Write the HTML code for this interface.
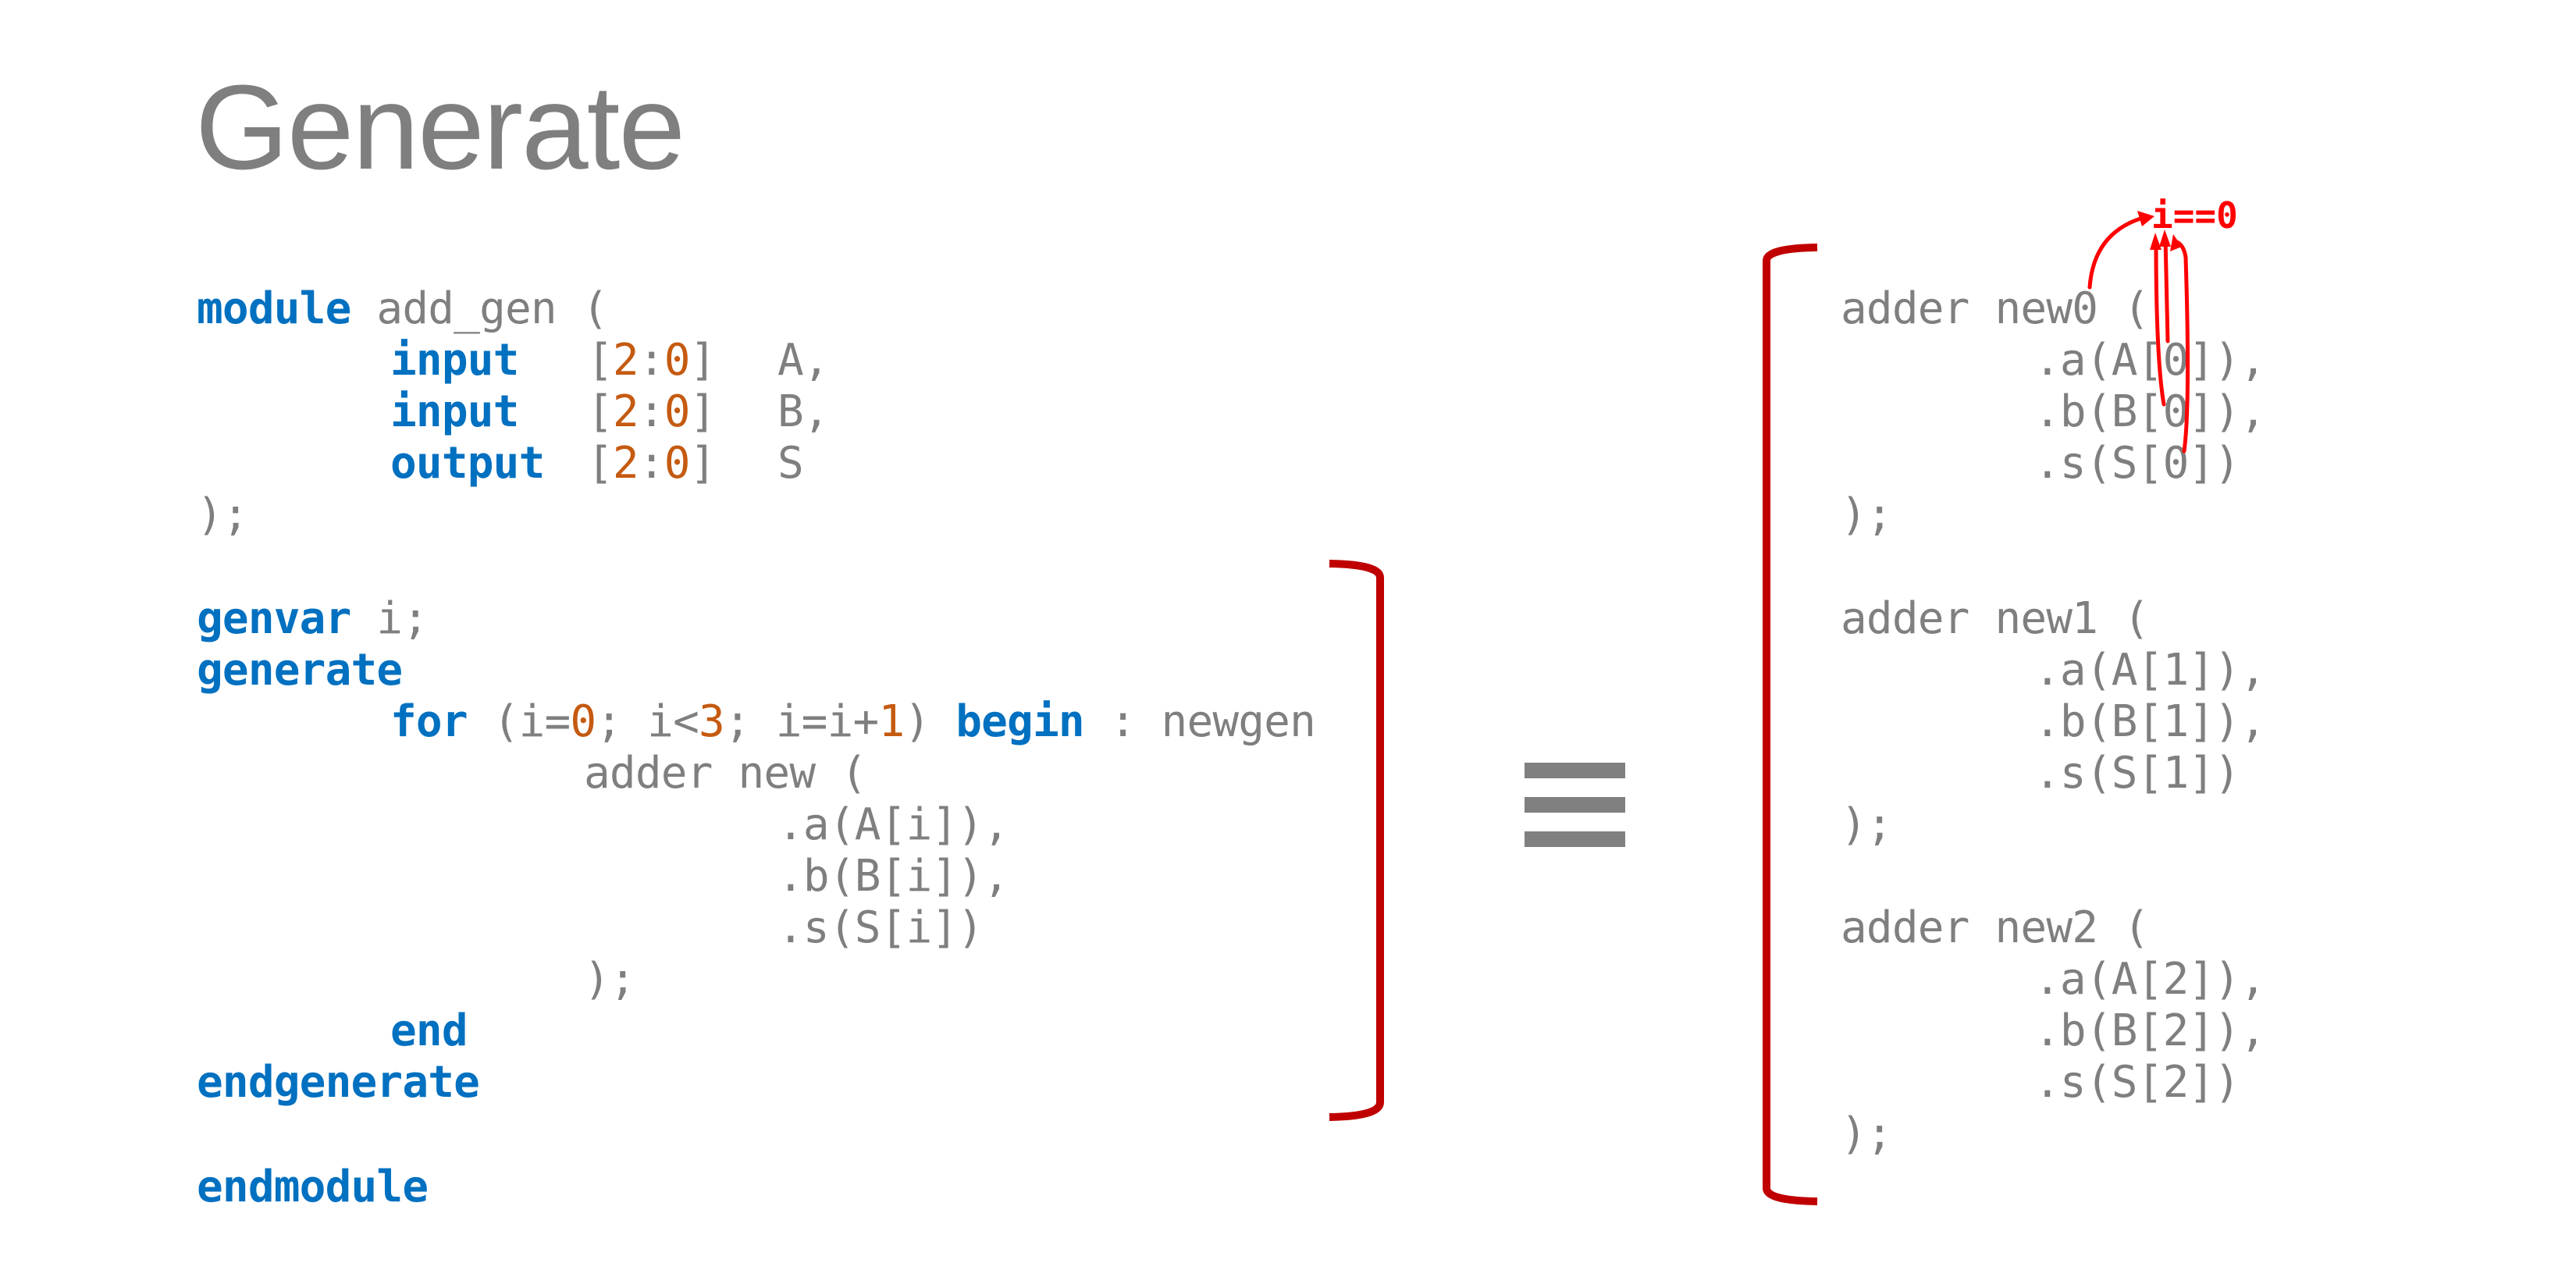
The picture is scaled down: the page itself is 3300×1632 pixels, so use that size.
<!DOCTYPE html>
<html><head><meta charset="utf-8"><style>
html,body{margin:0;padding:0;background:#fff;}
body{width:3300px;height:1632px;position:relative;overflow:hidden;}
.t{position:absolute;left:250px;top:86px;font-family:"Liberation Sans",sans-serif;font-size:154px;color:#7f7f7f;line-height:1;letter-spacing:-2px;}
.l{position:absolute;font-family:"DejaVu Sans Mono",monospace;font-size:56px;line-height:66px;height:66px;white-space:pre;color:#7f7f7f;letter-spacing:-0.8px;}
.k{color:#0070c0;font-weight:bold;}
.n{color:#c55a11;}
</style></head><body>
<div class="t">Generate</div>

<div class="l" style="left:252px;top:363px"><span class="k">module</span> add_gen (</div>
<div class="l" style="left:500px;top:429px"><span class="k">input</span></div>
<div class="l" style="left:752px;top:429px">[<span class="n">2</span>:<span class="n">0</span>]</div>
<div class="l" style="left:996px;top:429px">A,</div>
<div class="l" style="left:500px;top:495px"><span class="k">input</span></div>
<div class="l" style="left:752px;top:495px">[<span class="n">2</span>:<span class="n">0</span>]</div>
<div class="l" style="left:996px;top:495px">B,</div>
<div class="l" style="left:500px;top:561px"><span class="k">output</span></div>
<div class="l" style="left:752px;top:561px">[<span class="n">2</span>:<span class="n">0</span>]</div>
<div class="l" style="left:996px;top:561px">S</div>
<div class="l" style="left:252px;top:627px">);</div>

<div class="l" style="left:252px;top:760px"><span class="k">genvar</span> i;</div>
<div class="l" style="left:252px;top:826px"><span class="k">generate</span></div>
<div class="l" style="left:500px;top:892px"><span class="k">for</span> (i=<span class="n">0</span>; i&lt;<span class="n">3</span>; i=i+<span class="n">1</span>) <span class="k">begin</span> : newgen</div>
<div class="l" style="left:748px;top:958px">adder new (</div>
<div class="l" style="left:996px;top:1024px">.a(A[i]),</div>
<div class="l" style="left:996px;top:1090px">.b(B[i]),</div>
<div class="l" style="left:996px;top:1156px">.s(S[i])</div>
<div class="l" style="left:748px;top:1222px">);</div>
<div class="l" style="left:500px;top:1288px"><span class="k">end</span></div>
<div class="l" style="left:252px;top:1354px"><span class="k">endgenerate</span></div>
<div class="l" style="left:252px;top:1488px"><span class="k">endmodule</span></div>

<div class="l" style="left:2358px;top:363px">adder new0 (</div>
<div class="l" style="left:2606px;top:429px">.a(A[0]),</div>
<div class="l" style="left:2606px;top:495px">.b(B[0]),</div>
<div class="l" style="left:2606px;top:561px">.s(S[0])</div>
<div class="l" style="left:2358px;top:627px">);</div>
<div class="l" style="left:2358px;top:760px">adder new1 (</div>
<div class="l" style="left:2606px;top:826px">.a(A[1]),</div>
<div class="l" style="left:2606px;top:892px">.b(B[1]),</div>
<div class="l" style="left:2606px;top:958px">.s(S[1])</div>
<div class="l" style="left:2358px;top:1024px">);</div>
<div class="l" style="left:2358px;top:1156px">adder new2 (</div>
<div class="l" style="left:2606px;top:1222px">.a(A[2]),</div>
<div class="l" style="left:2606px;top:1288px">.b(B[2]),</div>
<div class="l" style="left:2606px;top:1354px">.s(S[2])</div>
<div class="l" style="left:2358px;top:1420px">);</div>

<div style="position:absolute;left:1953px;top:977px;width:129px;height:20px;background:#808080"></div>
<div style="position:absolute;left:1953px;top:1021px;width:129px;height:20px;background:#808080"></div>
<div style="position:absolute;left:1953px;top:1065px;width:129px;height:20px;background:#808080"></div>

<div style="position:absolute;left:2756px;top:248px;font-family:'DejaVu Sans Mono',monospace;font-weight:bold;font-size:46px;color:#ff0000;line-height:56px">i==0</div>

<svg width="3300" height="1632" style="position:absolute;left:0;top:0" xmlns="http://www.w3.org/2000/svg">
<g fill="none" stroke="#c00000" stroke-width="10">
<path d="M1703 722 Q1768 723 1768 740 L1768 1412 Q1768 1430 1703 1431"/>
<path d="M2328 317 Q2263 318 2263 334 L2263 1522 Q2263 1538 2328 1539"/>
</g>
<g fill="none" stroke="#ff0000" stroke-width="5" stroke-linecap="round">
<path d="M2677 368 Q2682 300 2742 280"/>
<path d="M2777 437 L2774 305"/>
<path d="M2772 518 Q2762 460 2762 310"/>
<path d="M2798 578 Q2806 520 2800 330 Q2798 315 2789 310"/>
</g>
<g fill="#ff0000">
<polygon points="2760,277 2738,270 2744,290"/>
<polygon points="2773,294 2766,316 2781,316"/>
<polygon points="2761,298 2754,320 2769,320"/>
<polygon points="2784,300 2780,322 2795,316"/>
</g>
</svg>
</body></html>
